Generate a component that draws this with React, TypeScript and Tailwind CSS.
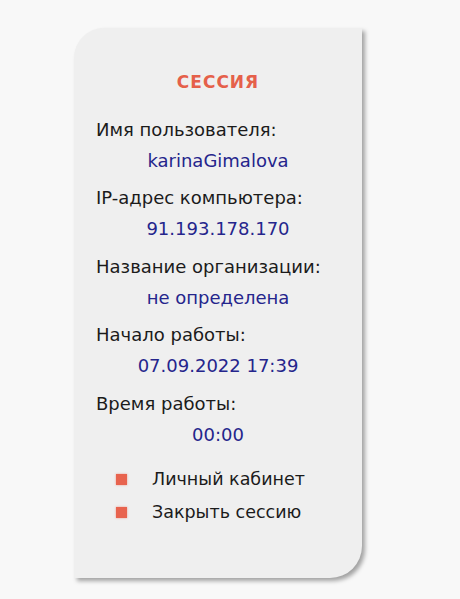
import React from 'react';

const SESSION_ROWS = [
  { label: 'Имя пользователя:', value: 'karinaGimalova' },
  { label: 'IP-адрес компьютера:', value: '91.193.178.170' },
  { label: 'Название организации:', value: 'не определена' },
  { label: 'Начало работы:', value: '07.09.2022 17:39' },
  { label: 'Время работы:', value: '00:00' },
];

const LINKS = ['Личный кабинет', 'Закрыть сессию'];

export default function App() {
  return (
    <main className="w-full h-[599px] bg-[#f8f8f8] font-['DejaVu_Sans',sans-serif] pt-[28px] pl-[74px]">
      {/* Session card */}
      <div className="w-[288px] h-[550px] bg-[#efefef] rounded-tl-[30px] rounded-br-[32px] shadow-[3px_3px_4px_rgba(0,0,0,0.35)] pt-[42px]">
        <h2 className="h-[24px] leading-[24px] text-center text-[17px] font-bold text-[#e5604a] tracking-[1px]">
          СЕССИЯ
        </h2>

        <div className="mt-[19.5px] pl-[22px] pr-[6px]">
          {SESSION_ROWS.map((row) => (
            <div key={row.label} className="mb-[6.5px]">
              <div className="h-[31px] leading-[31px] text-[18px] text-[#1b1b1b] whitespace-nowrap">
                {row.label}
              </div>
              <div className="h-[31px] leading-[31px] text-[18px] text-[#25258c] text-center pr-[16px] whitespace-nowrap">
                {row.value}
              </div>
            </div>
          ))}
        </div>

        {/* Links */}
        <div className="mt-[13.5px] pl-[42px] flex flex-col">
          {LINKS.map((link) => (
            <a key={link} href="#" className="h-[33px] flex items-center gap-[25px] text-[17.5px] text-[#1b1b1b] whitespace-nowrap">
              <span className="w-[11px] h-[11px] bg-[#e8634e] shadow-[0_0_2px_rgba(232,99,78,0.6)]" />
              {link}
            </a>
          ))}
        </div>
      </div>
    </main>
  );
}
